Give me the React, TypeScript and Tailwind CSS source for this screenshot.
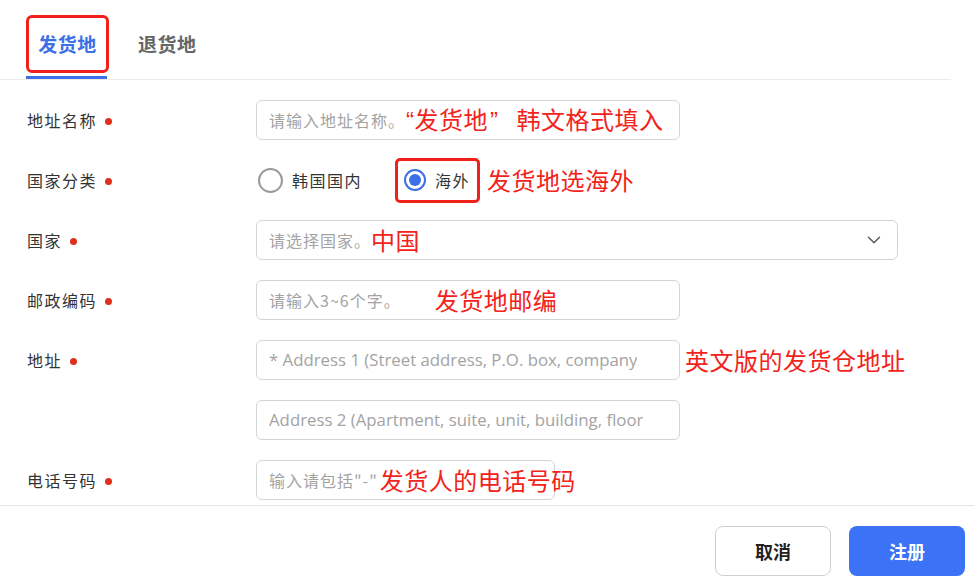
import { ChevronDown } from 'lucide-react';

const FONT = "font-['Noto_Sans_CJK_SC','Noto_Sans',sans-serif]";

function Label({ text }: { text: string }) {
  return (
    <div className="w-[229px] shrink-0 flex items-center gap-2 text-[16px] text-[#333] tracking-[1.5px]">
      <span>{text}</span>
      <span className="w-[7px] h-[7px] rounded-full bg-[#e0301a] mt-[3px]"></span>
    </div>
  );
}

function Note({ children, className = '' }: { children: React.ReactNode; className?: string }) {
  return (
    <span className={`text-[24px] leading-none text-[#f2231b] whitespace-nowrap tracking-[0.5px] ${className}`}>
      {children}
    </span>
  );
}

function Box({ children, className = '' }: { children?: React.ReactNode; className?: string }) {
  return (
    <div
      className={`h-[40px] border border-[#d4d4d4] rounded-[6px] flex items-center pl-3 text-[16px] text-[#a3a3a3] whitespace-nowrap ${className}`}
    >
      {children}
    </div>
  );
}

export default function App() {
  return (
    <div className={`w-[974px] h-[583px] bg-white overflow-hidden ${FONT}`}>
      {/* tabs */}
      <div className="pl-[26px] pt-[15px] w-[951px] border-b border-[#ebebeb] flex items-start">
        <div className="flex flex-col">
          <div className="w-[83px] h-[58px] border-[3px] border-[#f0201a] rounded-[6px] flex items-center justify-center text-[19px] font-bold text-[#3d6fe6] tracking-[0.5px]">
            发货地
          </div>
          <div className="mt-[3px] h-[3px] w-[81px] bg-[#3d6fe6]"></div>
        </div>
        <div className="ml-[29px] h-[58px] flex items-center text-[19px] font-bold text-[#666] tracking-[0.5px]">退货地</div>
      </div>

      {/* form */}
      <div className="pl-[27px] pt-[20px] flex flex-col gap-5">
        <div className="flex items-center h-[40px]">
          <Label text="地址名称" />
          <Box className="w-[424px]">
            <span className="tracking-[1px]">请输入地址名称。</span>
            <Note className="ml-[1px]">
              <span className="font-['Liberation_Sans',sans-serif]">“</span>发货地
              <span className="font-['Liberation_Sans',sans-serif] ml-[2px]">”</span>
              <span className="ml-[18px]">韩文格式填入</span>
            </Note>
          </Box>
        </div>

        <div className="flex items-center h-[40px]">
          <Label text="国家分类" />
          <div className="flex items-center text-[16px] text-[#333] tracking-[1.5px]">
            <span className="ml-[2px] w-[25px] h-[25px] rounded-full border-2 border-[#9a9a9a]"></span>
            <span className="ml-[9px]">韩国国内</span>
            <div className="ml-[33px] w-[85px] h-[45px] border-[3px] border-[#f0201a] rounded-[5px] flex items-center pl-[6px]">
              <span className="w-[22px] h-[22px] rounded-full border-2 border-[#3d6fe6] flex items-center justify-center">
                <span className="w-[12px] h-[12px] rounded-full bg-[#3d6fe6]"></span>
              </span>
              <span className="ml-[9px]">海外</span>
            </div>
            <Note className="ml-[7px]">发货地选海外</Note>
          </div>
        </div>

        <div className="flex items-center h-[40px]">
          <Label text="国家" />
          <Box className="w-[642px] pr-3 justify-between">
            <span className="flex items-center">
              <span className="tracking-[1px]">请选择国家。</span>
              <Note>中国</Note>
            </span>
            <ChevronDown size={22} strokeWidth={1.5} className="text-[#555]" />
          </Box>
        </div>

        <div className="flex items-center h-[40px]">
          <Label text="邮政编码" />
          <Box className="w-[424px]">
            <span className="tracking-[1px]">请输入3~6个字。</span>
            <Note className="ml-[34px]">发货地邮编</Note>
          </Box>
        </div>

        <div className="flex items-center h-[40px]">
          <Label text="地址" />
          <Box className="w-[424px] overflow-hidden pr-6">
            <span className="font-['Open_Sans',sans-serif] text-[16.8px] overflow-hidden">
              * Address 1 (Street address, P.O. box, company
            </span>
          </Box>
          <Note className="ml-[5px]">英文版的发货仓地址</Note>
        </div>

        <div className="flex items-center h-[40px]">
          <div className="w-[229px] shrink-0"></div>
          <Box className="w-[424px] overflow-hidden pr-[28px]">
            <span className="font-['Open_Sans',sans-serif] text-[16.8px] overflow-hidden">
              Address 2 (Apartment, suite, unit, building, floor
            </span>
          </Box>
        </div>

        <div className="flex items-center h-[40px]">
          <Label text="电话号码" />
          <Box className="w-[299px]">
            <span className="tracking-[1px]">输入请包括"-"</span>
            <Note className="ml-[2px]">发货人的电话号码</Note>
          </Box>
        </div>
      </div>

      {/* footer */}
      <div className="mt-[5px] border-t border-[#e5e5e5] pt-[20px] pr-[9px] flex justify-end gap-[18px]">
        <button className="w-[116px] h-[50px] rounded-[8px] border border-[#cfcfcf] bg-white text-[18px] font-bold text-[#222]">
          取消
        </button>
        <button className="w-[116px] h-[50px] rounded-[8px] bg-[#3c72f5] text-[18px] font-bold text-white">
          注册
        </button>
      </div>
    </div>
  );
}
